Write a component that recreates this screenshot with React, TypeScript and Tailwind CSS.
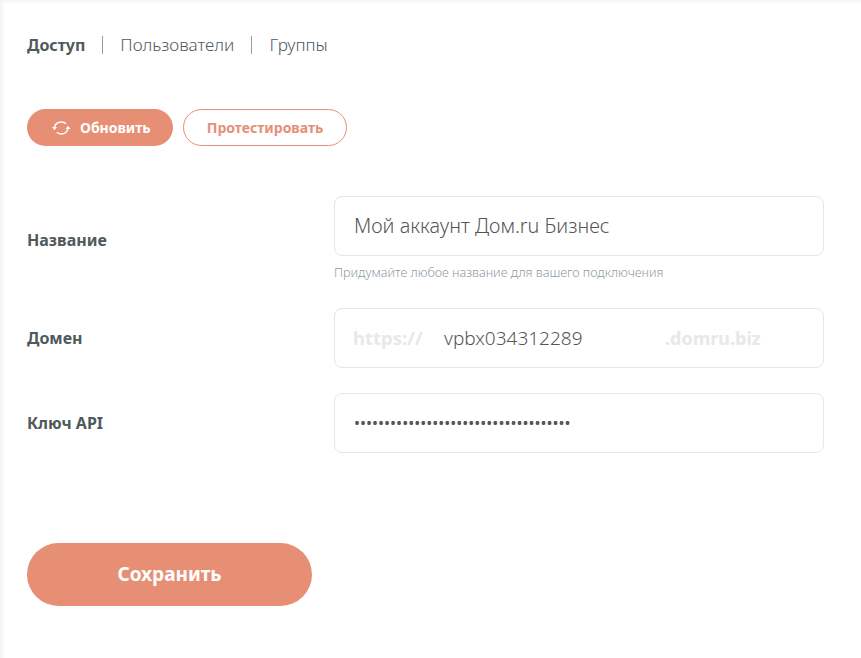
function SyncIcon() {
  return (
    <svg width="19" height="14" viewBox="0 0 19 14" fill="none" className="shrink-0">
      <path d="M2.5 6.500C3 3 6 .9 9.500 .9c2 0 3.500 .6 4.600 1.800" stroke="white" strokeWidth="1.500" />
      <path d="M0 6h5L2.500 9.200z" fill="white" />
      <path d="M16 7.500c-.5 3.300-3.500 5.500-6.500 5.500-2 0-3.500-.6-4.600-1.800" stroke="white" strokeWidth="1.500" />
      <path d="M13.500 8h5L16 4.800z" fill="white" />
    </svg>
  )
}

function Field({ label, children, hint }: { label: string; children: React.ReactNode; hint?: string }) {
  return (
    <div className="flex">
      <div className="w-[307px] shrink-0 flex items-center text-[16px] font-bold text-[#4f5a5c]">
        <span>{label}</span>
      </div>
      <div className="w-[490px]">
        <div className="h-[60px] rounded-[8px] border border-[#e6e6e6] bg-white flex items-center px-[19px] text-[19px] font-light text-[#555]">
          {children}
        </div>
        {hint && <p className="mt-[9px] mb-[2px] text-[12.6px] leading-[16px] font-light text-[#8f9ba5]">{hint}</p>}
      </div>
    </div>
  )
}

export default function App() {
  return (
    <div className="min-h-[658px] bg-white pl-[27px] pt-[35px] font-['Noto_Sans',sans-serif] shadow-[inset_4px_3px_4px_-2px_#f0f0f0]">
      <nav className="flex items-center h-[20px] text-[17.2px] font-light text-[#4f5a63]">
        <span className="text-[16px] font-bold text-[#4f5a5c]">Доступ</span>
        <span className="mx-[17px] h-[18px] w-[1px] bg-[#8f9fae]" />
        <span>Пользователи</span>
        <span className="mx-[17px] h-[18px] w-[1px] bg-[#8f9fae]" />
        <span>Группы</span>
      </nav>

      <div className="mt-[54px] flex gap-[10px]">
        <button className="h-[37px] w-[146px] rounded-full bg-[#e68f75] flex items-center pl-[25px] gap-[9px] text-[14px] font-bold text-white">
          <SyncIcon />
          Обновить
        </button>
        <button className="h-[37px] w-[164px] rounded-full border border-[#e68f75] text-[14px] font-bold text-[#e68f75]">
          Протестировать
        </button>
      </div>

      <div className="mt-[50px] flex flex-col gap-[25px]">
        <Field label="Название" hint="Придумайте любое название для вашего подключения">
          <span className="text-[19.8px]">Мой аккаунт Дом.ru Бизнес</span>
        </Field>
        <Field label="Домен">
          <span className="w-[91px] -ml-[1px] text-[18.500px] font-bold text-[#e8e8e8]">https://</span>
          <span className="w-[221px]">vpbx034312289</span>
          <span className="text-[18px] font-bold text-[#e8e8e8]">.domru.biz</span>
        </Field>
        <Field label="Ключ API">
          <span className="text-[16px] font-normal">••••••••••••••••••••••••••••••••••••</span>
        </Field>
      </div>

      <button className="mt-[90px] h-[63px] w-[285px] rounded-full bg-[#e68f75] text-[19px] font-bold text-white">
        Сохранить
      </button>
    </div>
  )
}
